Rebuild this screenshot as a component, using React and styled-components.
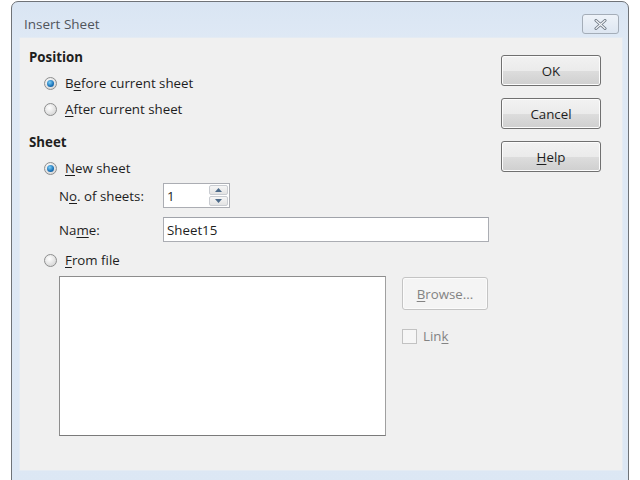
import React from 'react';
import styled, { createGlobalStyle } from 'styled-components';

const GlobalStyle = createGlobalStyle`
  html, body {
    margin: 0;
    padding: 0;
    background: #ffffff;
    overflow: hidden;
  }
  body {
    font-family: "Open Sans", "Noto Sans", sans-serif;
    font-size: 13.3px;
    color: #1e1e1e;
  }
`;

const Window = styled.div`
  margin: 1px 0 0 11px;
  width: 618px;
  height: 500px;
  box-sizing: border-box;
  border: 1px solid #6f7378;
  border-radius: 7px 7px 0 0;
  background: linear-gradient(#d9e5f3, #dfe9f5 40px, #dce7f4);
  display: flex;
  flex-direction: column;
  padding: 0 6px 0 8px;
`;

const TitleBar = styled.div`
  height: 36px;
  box-sizing: border-box;
  display: flex;
  align-items: center;
  justify-content: space-between;
  padding: 8px 3px 0 4px;
`;

const Title = styled.span`
  font-size: 13.5px;
  color: #50555b;
`;

const CloseButton = styled.div`
  width: 37px;
  height: 20px;
  box-sizing: border-box;
  border: 1px solid #a4adb8;
  border-radius: 3px;
  background: linear-gradient(#eef3f9, #dde6f1);
  display: flex;
  align-items: center;
  justify-content: center;
`;

const Panel = styled.div`
  background: #f0f0f0;
  height: 432px;
  display: flex;
  justify-content: space-between;
  box-shadow: 0 0 0 1px #e4ebf3;
`;

const LeftColumn = styled.div`
  padding: 6px 0 0 9px;
  display: flex;
  flex-direction: column;
`;

const Heading = styled.div`
  font-weight: 700;
  height: 26px;
  line-height: 26px;
  margin-top: ${p => p.$gap || 0}px;
`;

const RadioRow = styled.label`
  display: flex;
  align-items: center;
  gap: 8px;
  height: 26px;
  padding-left: 15px;
  margin-top: ${p => p.$gap || 0}px;
`;

const RadioDot = styled.span`
  width: 13px;
  height: 13px;
  box-sizing: border-box;
  border-radius: 50%;
  border: 1px solid #8e8f8f;
  background: radial-gradient(circle at 40% 35%, #ffffff, #d6d6d6 80%);
  display: flex;
  align-items: center;
  justify-content: center;
  &::after {
    content: '';
    display: ${p => (p.$checked ? 'block' : 'none')};
    width: 7px;
    height: 7px;
    border-radius: 50%;
    background: radial-gradient(circle at 40% 35%, #7fd0f7, #1a72b8 60%, #0e4d86);
  }
`;

const FieldRow = styled.div`
  display: flex;
  align-items: center;
  padding-left: 30px;
  margin-top: ${p => p.$gap || 0}px;
`;

const FieldLabel = styled.span`
  width: 104px;
`;

const TextField = styled.div`
  width: ${p => p.$w}px;
  height: 25px;
  box-sizing: border-box;
  border: 1px solid #abadb3;
  border-top-color: #a0a3aa;
  background: #ffffff;
  display: flex;
  align-items: center;
  padding-left: 3px;
`;

const SpinField = styled.div`
  width: 67px;
  height: 25px;
  box-sizing: border-box;
  border: 1px solid #abadb3;
  background: #ffffff;
  display: flex;
  align-items: stretch;
`;

const SpinValue = styled.span`
  flex: 1;
  display: flex;
  align-items: center;
  padding-left: 3px;
`;

const SpinButtons = styled.div`
  width: 19px;
  display: flex;
  flex-direction: column;
  gap: 1px;
  padding: 1px 1px 1px 0;
`;

const SpinArrow = styled.div`
  flex: 1;
  border: 1px solid #c9ccd1;
  border-radius: 2px;
  background: linear-gradient(#f6f6f6, #e3e3e3);
  display: flex;
  align-items: center;
  justify-content: center;
`;

const FileArea = styled.div`
  display: flex;
  padding-left: 30px;
  margin-top: 3px;
  gap: 16px;
`;

const ListBox = styled.div`
  width: 327px;
  height: 160px;
  box-sizing: border-box;
  background: #ffffff;
  border: 1px solid #8d8d8d;
  border-bottom-color: #7a7a7a;
  border-right-color: #a0a0a0;
`;

const FileSide = styled.div`
  display: flex;
  flex-direction: column;
  padding-top: 1px;
`;

const DialogButton = styled.div`
  width: ${p => p.$w || 100}px;
  height: ${p => p.$h || 31}px;
  box-sizing: border-box;
  flex-shrink: 0;
  border: 1px solid ${p => (p.$disabled ? '#c4c4c4' : '#707070')};
  border-radius: 3px;
  background: ${p =>
    p.$disabled
      ? '#f4f4f4'
      : 'linear-gradient(#f2f2f2 0%, #ebebeb 50%, #dddddd 51%, #cfcfcf 100%)'};
  color: ${p => (p.$disabled ? '#838383' : '#1e1e1e')};
  display: flex;
  align-items: center;
  justify-content: center;
  box-shadow: inset 0 0 0 1px ${p => (p.$disabled ? '#fbfbfb' : '#fcfcfc')};
`;

const CheckRow = styled.div`
  display: flex;
  align-items: center;
  gap: 6px;
  margin-top: 17px;
  color: #838383;
`;

const CheckBox = styled.span`
  width: 15px;
  height: 15px;
  box-sizing: border-box;
  border: 1px solid #c2c2c2;
  background: #f6f6f6;
`;

const RightColumn = styled.div`
  padding: 17px 21px 0 0;
  display: flex;
  flex-direction: column;
  gap: 12px;
`;

const U = styled.span`
  text-decoration: underline;
  text-underline-offset: 2px;
`;

export default function App() {
  return (
    <>
      <GlobalStyle />
      <Window>
        <TitleBar>
          <Title>Insert Sheet</Title>
          <CloseButton>
            <svg width="13" height="11" viewBox="0 0 13 11">
              <path d="M2 1.5 L11 9.5 M11 1.5 L2 9.5" stroke="#6b7580" strokeWidth="3" strokeLinecap="round" />
              <path d="M2 1.5 L11 9.5 M11 1.5 L2 9.5" stroke="#f4f6f9" strokeWidth="1.2" strokeLinecap="round" />
            </svg>
          </CloseButton>
        </TitleBar>
        <Panel>
          <LeftColumn>
            <Heading>Position</Heading>
            <RadioRow>
              <RadioDot $checked />
              <span>B<U>e</U>fore current sheet</span>
            </RadioRow>
            <RadioRow>
              <RadioDot />
              <span><U>A</U>fter current sheet</span>
            </RadioRow>
            <Heading $gap={7}>Sheet</Heading>
            <RadioRow>
              <RadioDot $checked />
              <span><U>N</U>ew sheet</span>
            </RadioRow>
            <FieldRow $gap={2}>
              <FieldLabel>N<U>o</U>. of sheets:</FieldLabel>
              <SpinField>
                <SpinValue>1</SpinValue>
                <SpinButtons>
                  <SpinArrow>
                    <svg width="7" height="4" viewBox="0 0 7 4"><path d="M0 4 L3.5 0 L7 4 Z" fill="#4d6b8a" /></svg>
                  </SpinArrow>
                  <SpinArrow>
                    <svg width="7" height="4" viewBox="0 0 7 4"><path d="M0 0 L3.5 4 L7 0 Z" fill="#4d6b8a" /></svg>
                  </SpinArrow>
                </SpinButtons>
              </SpinField>
            </FieldRow>
            <FieldRow $gap={9}>
              <FieldLabel>Na<U>m</U>e:</FieldLabel>
              <TextField $w={326}>Sheet15</TextField>
            </FieldRow>
            <RadioRow $gap={5}>
              <RadioDot />
              <span><U>F</U>rom file</span>
            </RadioRow>
            <FileArea>
              <ListBox />
              <FileSide>
                <DialogButton $w={86} $h={33} $disabled>
                  <span><U>B</U>rowse...</span>
                </DialogButton>
                <CheckRow>
                  <CheckBox />
                  <span>Lin<U>k</U></span>
                </CheckRow>
              </FileSide>
            </FileArea>
          </LeftColumn>
          <RightColumn>
            <DialogButton>OK</DialogButton>
            <DialogButton>Cancel</DialogButton>
            <DialogButton><span><U>H</U>elp</span></DialogButton>
          </RightColumn>
        </Panel>
      </Window>
    </>
  );
}
